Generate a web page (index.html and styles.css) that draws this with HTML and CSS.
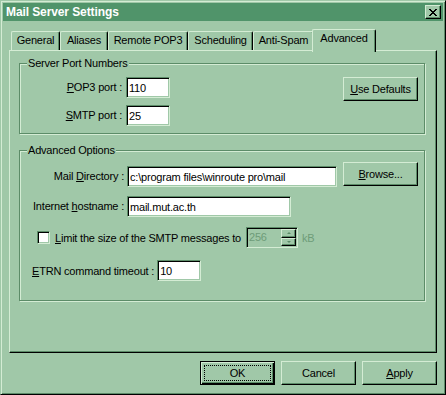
FILE: index.html
```html
<!DOCTYPE html>
<html lang="en">
<head>
    <meta charset="UTF-8">
    <title>Mail Server Settings</title>
    <link rel="stylesheet" href="styles.css">
</head>
<body>

    <div class="window">
        <div class="titlebar">
            <span class="title">Mail Server Settings</span>
            <button class="close-btn">
                <svg width="8" height="7" viewBox="0 0 8 7" shape-rendering="crispEdges">
                    <path d="M0 0h2v1h1v1h2v-1h1v-1h2v1h-1v1h-1v1h-1v1h1v1h1v1h1v1h-2v-1h-1v-1h-2v1h-1v1h-2v-1h1v-1h1v-1h1v-1h-1v-1h-1v-1h-1z" fill="#000"/>
                </svg>
            </button>
        </div>

        <div class="tabs">
            <div class="tab tab-general">General</div>
            <div class="tab tab-aliases">Aliases</div>
            <div class="tab tab-remote">Remote POP3</div>
            <div class="tab tab-scheduling">Scheduling</div>
            <div class="tab tab-antispam">Anti-Spam</div>
            <div class="tab tab-advanced active">Advanced</div>
        </div>

        <div class="panel">
            <fieldset class="group group-ports">
                <legend>Server Port Numbers</legend>
                <div class="ports">
                    <div class="port-fields">
                        <div class="field-row">
                            <label class="label port-label"><u>P</u>OP3 port :</label>
                            <input class="text-input port-input" type="text" value="110">
                        </div>
                        <div class="field-row">
                            <label class="label port-label"><u>S</u>MTP port :</label>
                            <input class="text-input port-input" type="text" value="25">
                        </div>
                    </div>
                    <button class="btn btn-side"><u>U</u>se Defaults</button>
                </div>
            </fieldset>

            <fieldset class="group group-advanced">
                <legend>Advanced Options</legend>
                <div class="field-row dir-row">
                    <label class="label adv-label">Mail <u>D</u>irectory :</label>
                    <input class="text-input dir-input" type="text" value="c:\program files\winroute pro\mail">
                    <button class="btn btn-side btn-browse"><u>B</u>rowse...</button>
                </div>
                <div class="field-row host-row">
                    <label class="label adv-label">Internet <u>h</u>ostname :</label>
                    <input class="text-input host-input" type="text" value="mail.mut.ac.th">
                </div>
                <div class="field-row limit-row">
                    <input class="checkbox" type="checkbox">
                    <label class="limit-label"><u>L</u>imit the size of the SMTP messages to</label>
                    <div class="spin">
                        <span class="spin-value">256</span>
                        <div class="spin-buttons">
                            <span class="spin-btn"><span class="arrow-up"></span></span>
                            <span class="spin-btn"><span class="arrow-down"></span></span>
                        </div>
                    </div>
                    <span class="unit">kB</span>
                </div>
                <div class="field-row etrn-row">
                    <label class="etrn-label"><u>E</u>TRN command timeout :</label>
                    <input class="text-input etrn-input" type="text" value="10">
                </div>
            </fieldset>
        </div>

        <div class="dialog-buttons">
            <button class="btn btn-default"><span class="focus">OK</span></button>
            <button class="btn">Cancel</button>
            <button class="btn"><u>A</u>pply</button>
        </div>
    </div>

</body>
</html>
```

FILE: styles.css
```css
body {
    margin: 0;
    font-family: "Liberation Sans", Arial, sans-serif;
    font-size: 11px;
    letter-spacing: -0.2px;
    color: #000;
    background-color: #a0c8a8;
}

u {
    text-decoration: underline;
    text-underline-offset: 1px;
}

.window {
    width: 446px;
    height: 395px;
    box-sizing: border-box;
    padding: 2px;
    background-color: #a0c8a8;
    border: 1px solid;
    border-color: #a0c8a8 #000 #000 #a0c8a8;
    box-shadow: inset 1px 1px #d4ecd4, inset -1px -1px #5c8c68;
}

.titlebar {
    height: 18px;
    display: flex;
    align-items: center;
    justify-content: space-between;
    padding: 0 2px 0 3px;
    background-color: #50946a;
}

.title {
    color: #fff;
    font-weight: bold;
    font-size: 12px;
    letter-spacing: -0.1px;
    line-height: 18px;
}

.close-btn {
    width: 16px;
    height: 14px;
    padding: 0;
    display: flex;
    align-items: center;
    justify-content: center;
    box-sizing: border-box;
    background-color: #a0c8a8;
    border: 1px solid;
    border-color: #d4ecd4 #000 #000 #d4ecd4;
    box-shadow: inset -1px -1px #5c8c68;
}

/* tabs */

.tabs {
    display: flex;
    align-items: flex-end;
    height: 21px;
    margin: 8px 0 0 8px;
}

.tab {
    height: 19px;
    box-sizing: border-box;
    line-height: 17px;
    text-align: center;
    background-color: #a0c8a8;
    border-top: 1px solid #d4ecd4;
    border-left: 1px solid #d4ecd4;
    border-right: 1px solid #000;
    border-radius: 2px 2px 0 0;
    box-shadow: inset -1px 0 #5c8c68;
}

.tab-general { width: 49px; }
.tab-aliases { width: 48px; }
.tab-remote { width: 80px; }
.tab-scheduling { width: 65px; }
.tab-antispam { width: 61px; }
.tab-advanced { width: 60px; }

.tab.active {
    position: relative;
    z-index: 1;
    width: 64px;
    height: 23px;
    margin: 0 -2px -2px -2px;
}

.panel {
    width: 428px;
    height: 303px;
    box-sizing: border-box;
    margin-left: 6px;
    border: 1px solid;
    border-color: #d4ecd4 #000 #000 #d4ecd4;
    box-shadow: inset -1px -1px #5c8c68;
}

/* group boxes */

.group {
    margin: 0 11px 0 9px;
    padding: 0;
    min-inline-size: 0;
    border: 1px solid #5c8c68;
    box-shadow: inset 1px 1px #d4ecd4, 1px 1px #d4ecd4;
}

.group legend {
    margin-left: 7px;
    padding: 0 1px;
    line-height: 13px;
    background-color: #a0c8a8;
}

.group-ports {
    margin-top: 6px;
    padding: 7px 0;
}

.group-advanced {
    margin-top: 10px;
    padding: 5px 0 19px;
}

.ports {
    display: flex;
    justify-content: space-between;
    align-items: flex-start;
}

.port-fields {
    display: flex;
    flex-direction: column;
    gap: 7px;
}

.field-row {
    display: flex;
    align-items: center;
}

.label {
    text-align: right;
    line-height: 21px;
}

.port-label {
    width: 102px;
    margin-right: 4px;
}

.adv-label {
    width: 104px;
    margin-right: 3px;
}

.text-input {
    height: 21px;
    box-sizing: border-box;
    padding: 0 2px;
    font: inherit;
    letter-spacing: inherit;
    color: #000;
    background-color: #fff;
    border: 1px solid;
    border-color: #5c8c68 #d4ecd4 #d4ecd4 #5c8c68;
    box-shadow: inset 1px 1px #000, inset -1px -1px #a0c8a8;
    outline: none;
}

.port-input { width: 44px; }
.dir-input { width: 210px; }
.host-input { width: 164px; }
.etrn-input { width: 44px; }

.dir-row {
    align-items: flex-start;
}

.dir-row .label,
.dir-row .text-input {
    margin-top: 4px;
}

.host-row {
    margin-top: 9px;
}

.limit-row {
    margin-top: 10px;
}

.etrn-row {
    margin-top: 12px;
}

/* buttons */

.btn {
    width: 75px;
    height: 24px;
    box-sizing: border-box;
    padding: 0;
    font: inherit;
    letter-spacing: inherit;
    color: #000;
    background-color: #a0c8a8;
    border: 1px solid;
    border-color: #d4ecd4 #000 #000 #d4ecd4;
    box-shadow: inset -1px -1px #5c8c68;
}

.btn-side {
    margin-right: 6px;
}

.btn-browse {
    margin-left: 6px;
}

.btn-default {
    display: flex;
    padding: 3px;
    border-color: #000;
    box-shadow: inset 1px 1px #d4ecd4, inset -1px -1px #000, inset -2px -2px #5c8c68;
}

.focus {
    flex: 1;
    display: flex;
    align-items: center;
    justify-content: center;
    border: 1px dotted #000;
}

.dialog-buttons {
    display: flex;
    justify-content: flex-end;
    gap: 6px;
    width: 434px;
    margin-top: 8px;
}

/* checkbox + spin */

.checkbox {
    appearance: none;
    width: 13px;
    height: 13px;
    margin: 0 5px 0 17px;
    box-sizing: border-box;
    background-color: #fff;
    border: 1px solid;
    border-color: #5c8c68 #d4ecd4 #d4ecd4 #5c8c68;
    box-shadow: inset 1px 1px #000, inset -1px -1px #a0c8a8;
}

.limit-label {
    margin-right: 5px;
}

.spin {
    display: flex;
    width: 52px;
    height: 21px;
    box-sizing: border-box;
    padding: 1px;
    border: 1px solid;
    border-color: #5c8c68 #d4ecd4 #d4ecd4 #5c8c68;
    box-shadow: inset 1px 1px #000, inset -1px -1px #a0c8a8;
}

.spin-value {
    flex: 1;
    padding-left: 1px;
    line-height: 17px;
    color: #6e9c78;
}

.spin-buttons {
    display: flex;
    flex-direction: column;
    width: 15px;
}

.spin-btn {
    flex: 1;
    display: flex;
    align-items: center;
    justify-content: center;
    box-sizing: border-box;
    border: 1px solid;
    border-color: #d4ecd4 #000 #000 #d4ecd4;
    box-shadow: inset -1px -1px #5c8c68;
}

.arrow-up {
    width: 0;
    height: 0;
    border-left: 2px solid transparent;
    border-right: 2px solid transparent;
    border-bottom: 2px solid #5c8c68;
}

.arrow-down {
    width: 0;
    height: 0;
    border-left: 2px solid transparent;
    border-right: 2px solid transparent;
    border-top: 2px solid #5c8c68;
}

.unit {
    margin-left: 4px;
    color: #6e9c78;
}

.etrn-label {
    margin: 0 3px 0 12px;
}
```
